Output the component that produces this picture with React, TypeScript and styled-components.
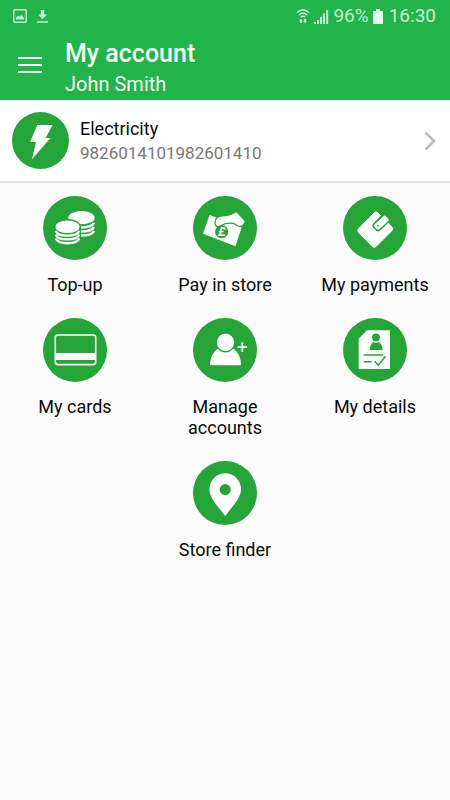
import React from "react";
import styled, { createGlobalStyle } from "styled-components";

const brand = "#23b34b";
const disc = "#25a537";

const GlobalStyle = createGlobalStyle`
  * { box-sizing: border-box; }
  body {
    margin: 0;
    background: #fafafa;
    color: #0c0c0c;
    font-family: Roboto, "Liberation Sans", sans-serif;
  }
`;

const Header = styled.header`
  background: ${brand};
  color: #f4fff5;
`;

const StatusBar = styled.div`
  display: flex;
  align-items: center;
  justify-content: space-between;
  height: 32px;
  padding: 0 14px 0 13px;
  color: #c4f3cb;
  font-size: 19px;
  line-height: 32px;
`;

const StatusGroup = styled.div<{ $gap: number }>`
  display: flex;
  align-items: center;
  gap: ${(p) => p.$gap}px;
`;

const Clock = styled.time`
  margin-left: 2px;
`;

const TitleBar = styled.div`
  display: flex;
  align-items: center;
  gap: 17px;
  height: 68px;
  padding: 0 12px 2px;
`;

const TitleText = styled.div`
  padding-top: 6px;
`;

const MenuButton = styled.button`
  display: grid;
  place-items: center;
  width: 36px;
  height: 36px;
  padding: 0;
  border: 0;
  background: transparent;
  color: inherit;
  cursor: pointer;
`;

const Title = styled.h1`
  margin: 0;
  font-size: 25px;
  font-weight: 500;
  line-height: 32px;
`;

const Owner = styled.p`
  margin: 0;
  font-size: 20px;
  line-height: 28px;
`;

const AccountLink = styled.a`
  display: flex;
  align-items: center;
  gap: 11px;
  padding: 12px 14px 12px 12px;
  background: #fff;
  border-bottom: 2px solid #e2e2e2;
  color: inherit;
  text-decoration: none;
`;

const AccountText = styled.div`
  flex: 1;
  min-width: 0;
  font-size: 18px;
  line-height: 24px;
`;

const AccountNumber = styled.div`
  color: #777;
  font-size: 17px;
`;

const Menu = styled.nav`
  display: flex;
  flex-wrap: wrap;
  justify-content: center;
  row-gap: 23px;
  padding-top: 13px;
`;

const MenuItem = styled.a`
  display: flex;
  flex-direction: column;
  align-items: center;
  gap: 14px;
  width: calc(100% / 3);
  padding: 0 20px;
  color: inherit;
  font-size: 18px;
  line-height: 21px;
  text-align: center;
  text-decoration: none;
`;

const MenuLabel = styled.span`
  white-space: nowrap;
`;

const WrappedLabel = styled.span`
  max-width: 90px;
`;

const Drawing = styled.svg`
  display: block;
  flex: none;
`;

const Disc = ({ children }: { children: React.ReactNode }) => (
  <Drawing width="64" height="64" viewBox="0 0 64 64" fill="#fff" aria-hidden="true">
    <circle cx="32" cy="32" r="32" fill={disc} />
    {children}
  </Drawing>
);

const CoinsIcon = () => (
  <Disc>
    <ellipse cx="38.500" cy="21.700" rx="13.200" ry="6.600" />
    <g fill="none" stroke="#fff" strokeWidth="2.500">
      <path d="M51 26.800c-1.400 3-6 4.600-13 4.600" />
      <path d="M51 30.900c-1.400 3-6 4.600-13 4.600" />
      <path d="M51 35c-1.400 3-6 4.600-13 4.600" />
    </g>
    <path d="M11.500 30c0-4 5.500-7 13-7s12.800 3 12.800 7v12c0 4-5.300 7-12.800 7s-13-3-13-7z" fill={disc} />
    <ellipse cx="24.500" cy="30.700" rx="12" ry="6.300" />
    <g fill="none" stroke="#fff" strokeWidth="2.400">
      <path d="M12.800 34.800c2 6.400 21.400 6.400 23.400 0" />
      <path d="M12.800 38.600c2 6.400 21.400 6.400 23.400 0" />
      <path d="M12.800 42.400c2 6.400 21.400 6.400 23.400 0" />
    </g>
  </Disc>
);

const PayIcon = () => (
  <Disc>
    <path d="M16.500 19 10 37.800l32.500 12.500L48.700 31 46 29z" />
    <circle cx="28.700" cy="35.700" r="6.600" fill={disc} />
    <text x="28.700" y="40.300" fontSize="13" fontWeight="700" fontStyle="italic" textAnchor="middle">£</text>
    <path
      d="M22.300 25.300c.5-2.500 2.600-4.600 5.400-5.100 3.600-.7 7.300-.4 10.300-1.700l5.500-3L52.500 25c-1 3-3 5.500-5.500 5.700-2.800-.1-4.300-3-7-3.400-3.800-.6-8 .1-11.300 2-2.300 1.300-5 1.600-6 .2-.8-1.100-.8-2.700-.4-4.200z"
      stroke={disc}
      strokeWidth="1.300"
    />
  </Disc>
);

const WalletIcon = () => (
  <Disc>
    <path
      d="M31.200 16.800q1.800-1.800 3.600 0L48.900 31q1.700 1.800 0 3.600L33 50.500q-1.800 1.800-3.600 0L15.500 36.300q-1.700-1.700 0-3.500z"
      stroke="#fff"
    />
    <path d="M39.500 17.800 30.200 27.600q-1.800 2.200 0 4.200l2.700 2.700q2.300 1.900 4.500 0L46.700 25.300 48 22l-5-5z" fill={disc} />
    <path d="M40.700 19.900q.9-.9 1.800 0l3 3q.8.900 0 1.800L36.600 33q-1.500 1.300-2.900 0l-2.100-2.100q-1.200-1.400 0-2.700z" />
    <circle cx="35" cy="29.800" r=".9" fill={disc} />
  </Disc>
);

const CardIcon = () => (
  <Disc>
    <rect x="12.300" y="17" width="40.400" height="29.600" rx="2.500" fill="none" stroke="#fff" strokeWidth="1.600" />
    <path d="M12 35h41v7H12z" />
  </Disc>
);

const PersonIcon = () => (
  <Disc>
    <path d="M17 47.300c0-7 2.800-14 8.500-16.800h14.300c5.500 2.800 8.200 9.800 8.200 16.800z" />
    <circle cx="32.500" cy="24.300" r="9.400" fill="#fff" stroke={disc} strokeWidth="1.400" />
    <path d="M49.300 24.300v9.600M44.500 29.100h9.600" stroke="#fff" strokeWidth="1.800" />
  </Disc>
);

const DetailsIcon = () => (
  <Disc>
    <path d="M24 12.300h23V51H15.700V20.700z" />
    <g fill={disc}>
      <circle cx="33" cy="19.500" r="3.900" />
      <path d="M26.600 32c.2-3.600 1.400-6.500 3.600-8q2.800 1.500 5.600 0c2.400 1.500 3.700 4.400 3.900 8z" />
    </g>
    <path d="M20.700 37h19.600M20.700 43.800h8M31.700 43.300l3.500 4 7.300-9" fill="none" stroke={disc} strokeWidth="1.500" />
  </Disc>
);

const PinIcon = () => (
  <Disc>
    <path
      fillRule="evenodd"
      d="M32.200 12.300A15.800 15.800 0 0 0 16.400 28.100C16.400 37 24 44.500 32.200 55 40.400 44.500 48 37 48 28.100A15.800 15.800 0 0 0 32.200 12.300zm0 10.700a5.600 5.600 0 1 1 0 11.200 5.600 5.600 0 0 1 0-11.200z"
    />
  </Disc>
);

const items = [
  { label: "Top-up", icon: <CoinsIcon /> },
  { label: "Pay in store", icon: <PayIcon /> },
  { label: "My payments", icon: <WalletIcon /> },
  { label: "My cards", icon: <CardIcon /> },
  { label: "Manage accounts", icon: <PersonIcon />, wrap: true },
  { label: "My details", icon: <DetailsIcon /> },
  { label: "Store finder", icon: <PinIcon /> },
];

export default function App() {
  return (
    <>
      <GlobalStyle />
      <Header>
        <StatusBar>
          <StatusGroup $gap={10}>
            <Drawing width="14" height="14" viewBox="0 0 14 14" aria-hidden="true">
              <rect x=".8" y=".8" width="12.400" height="12.400" rx="1" fill="none" stroke="currentColor" strokeWidth="1.500" />
              <path d="M3 10.500V9l2-2.500 1.500 1.300L8.500 6 11 9v1.500z" fill="currentColor" />
            </Drawing>
            <Drawing width="11" height="14" viewBox="0 0 11 14" fill="currentColor" aria-hidden="true">
              <path d="M3.800 1h3.400v4.500H10L5.500 10.300 1 5.500h2.800zM0 12.300h11v1.400H0z" />
            </Drawing>
          </StatusGroup>
          <StatusGroup $gap={4}>
            <Drawing width="14" height="16" viewBox="0 0 14 16" aria-hidden="true">
              <path d="M1 4.500Q7-1.200 13 4.500M3 7q4-3.800 8 0M4.800 9.300q2.200-2 4.400 0" fill="none" stroke="currentColor" strokeWidth="1.400" />
              <path d="m5 10.800 2 2.200H6v2H4v-2H3zM9 15.300 7 13h1v-2h2v2h1z" fill="currentColor" />
            </Drawing>
            <Drawing width="15" height="15" viewBox="0 0 15 15" fill="currentColor" aria-hidden="true">
              <path d="M0 13h2v2H0zM3 11h2v4H3zM6 8h2v7H6zM9 4.500h2V15H9zM12.200 1h2v14h-2z" />
            </Drawing>
            <span>96%</span>
            <Drawing width="10" height="15" viewBox="0 0 10 15" fill="#e3fbe6" aria-hidden="true">
              <path d="M3 0h4v2h3v13H0V2h3z" />
            </Drawing>
            <Clock>16:30</Clock>
          </StatusGroup>
        </StatusBar>
        <TitleBar>
          <MenuButton type="button" aria-label="Open menu">
            <Drawing width="24" height="16" viewBox="0 0 24 16" fill="currentColor" aria-hidden="true">
              <path d="M0 0h24v2H0zM0 7h24v2H0zM0 14h24v2H0z" />
            </Drawing>
          </MenuButton>
          <TitleText>
            <Title>My account</Title>
            <Owner>John Smith</Owner>
          </TitleText>
        </TitleBar>
      </Header>
      <main>
        <AccountLink href="#electricity">
          <Drawing width="57" height="57" viewBox="0 0 57 57" aria-hidden="true">
            <circle cx="28.500" cy="28.500" r="28.500" fill={disc} />
            <path d="M25.300 13h15.400l-7.200 13h5L20 47.300 24 30h-6z" fill="#fff" />
          </Drawing>
          <AccountText>
            <div>Electricity</div>
            <AccountNumber>9826014101982601410</AccountNumber>
          </AccountText>
          <Drawing width="12" height="20" viewBox="0 0 12 20" aria-hidden="true">
            <path d="m1.500 1.500 8.500 8.500-8.500 8.500" fill="none" stroke="#bdbdbd" strokeWidth="2.600" />
          </Drawing>
        </AccountLink>
        <Menu aria-label="Account">
          {items.map((item) => (
            <MenuItem key={item.label} href={"#" + item.label.toLowerCase().replace(/ /g, "-")}>
              {item.icon}
              {item.wrap ? <WrappedLabel>{item.label}</WrappedLabel> : <MenuLabel>{item.label}</MenuLabel>}
            </MenuItem>
          ))}
        </Menu>
      </main>
    </>
  );
}
